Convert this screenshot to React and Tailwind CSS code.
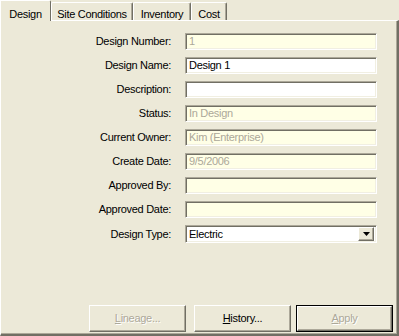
import React from "react";

const fields = [
  { label: "Design Number:", value: "1", kind: "ro" },
  { label: "Design Name:", value: "Design 1", kind: "edit" },
  { label: "Description:", value: "", kind: "edit" },
  { label: "Status:", value: "In Design", kind: "ro" },
  { label: "Current Owner:", value: "Kim (Enterprise)", kind: "ro" },
  { label: "Create Date:", value: "9/5/2006", kind: "ro" },
  { label: "Approved By:", value: "", kind: "ro" },
  { label: "Approved Date:", value: "", kind: "ro" },
];

const sunken =
  "border border-t-[#aca899] border-l-[#aca899] border-r-white border-b-white shadow-[inset_1px_1px_0_#716f64,inset_-1px_-1px_0_#f1efe2]";

const raised =
  "border border-t-white border-l-white border-r-[#716f64] border-b-[#716f64] shadow-[inset_-1px_-1px_0_#aca899]";

function Tab({ label, active, width }) {
  if (active) {
    return (
      <div
        className={`relative z-10 -mb-px h-[21px] ${width} flex items-start justify-center pt-[5px] bg-[#ece9d8] border-l border-t border-l-white border-t-white border-r border-r-[#716f64] rounded-tr-[2px]`}
      >
        {label}
      </div>
    );
  }
  return (
    <div
      className={`h-[18px] ${width} flex items-start justify-center pt-[3px] border-l border-t border-l-white border-t-white border-r border-r-[#716f64] shadow-[inset_-1px_0_0_#aca899] rounded-t-[2px]`}
    >
      {label}
    </div>
  );
}

function Field({ label, value, kind }) {
  const bg = kind === "edit" ? "bg-white text-black" : "bg-[#ffffe6] text-[#aca899]";
  return (
    <div className="flex items-center">
      <div className="w-[170px] text-right text-black">{label}</div>
      <div className={`ml-[14px] w-[192px] h-[17px] ${sunken} ${bg} pl-[3px] flex items-center leading-none`}>
        {value}
      </div>
    </div>
  );
}

function Btn({ children, disabled, isDefault, className = "" }) {
  const text = disabled ? "text-[#aca899] [text-shadow:1px_1px_0_#fff]" : "text-black";
  const inner = (
    <div className={`h-full w-full ${raised} flex items-center justify-center ${text}`}>{children}</div>
  );
  if (isDefault) {
    return <div className={`h-[27px] w-[97px] border border-black ${className}`}>{inner}</div>;
  }
  return <div className={`h-[27px] w-[97px] ${className}`}>{inner}</div>;
}

export default function App() {
  return (
    <div className="w-[399px] h-[336px] bg-[#ece9d8] font-['Liberation_Sans',Arial,sans-serif] text-[11px] tracking-[-0.3px] text-black flex flex-col overflow-hidden select-none">
      <div className="h-[20px] flex items-end">
        <Tab label="Design" active width="w-[51px]" />
        <Tab label="Site Conditions" width="w-[82px]" />
        <Tab label="Inventory" width="w-[58px]" />
        <Tab label="Cost" width="w-[36px]" />
      </div>

      <div className="flex-1 flex flex-col border-t border-l border-t-white border-l-white border-r-2 border-r-[#716f64] border-b-2 border-b-[#716f64] shadow-[inset_-1px_-1px_0_#aca899]">
        <div className="pt-[12px] flex flex-col gap-[7px]">
          {fields.map((f) => (
            <Field key={f.label} {...f} />
          ))}
          <div className="flex items-center">
            <div className="w-[170px] text-right">Design Type:</div>
            <div className={`ml-[14px] w-[192px] h-[18px] ${sunken} bg-white flex items-center pl-[3px] pr-[2px]`}>
              <span className="flex-1 leading-none">Electric</span>
              <div className={`w-[16px] h-[14px] bg-[#ece9d8] ${raised} flex items-center justify-center`}>
                <svg width="7" height="4" viewBox="0 0 7 4">
                  <path d="M0 0h7L3.5 4z" fill="#000" />
                </svg>
              </div>
            </div>
          </div>
        </div>

        <div className="mt-auto flex justify-end items-center pr-[4px] pb-[2px]">
          <Btn disabled>
            <span><u>L</u>ineage...</span>
          </Btn>
          <Btn className="ml-[8px]">
            <span><u>H</u>istory...</span>
          </Btn>
          <Btn disabled isDefault className="ml-[5px]">
            <span><u>A</u>pply</span>
          </Btn>
        </div>
      </div>
    </div>
  );
}
